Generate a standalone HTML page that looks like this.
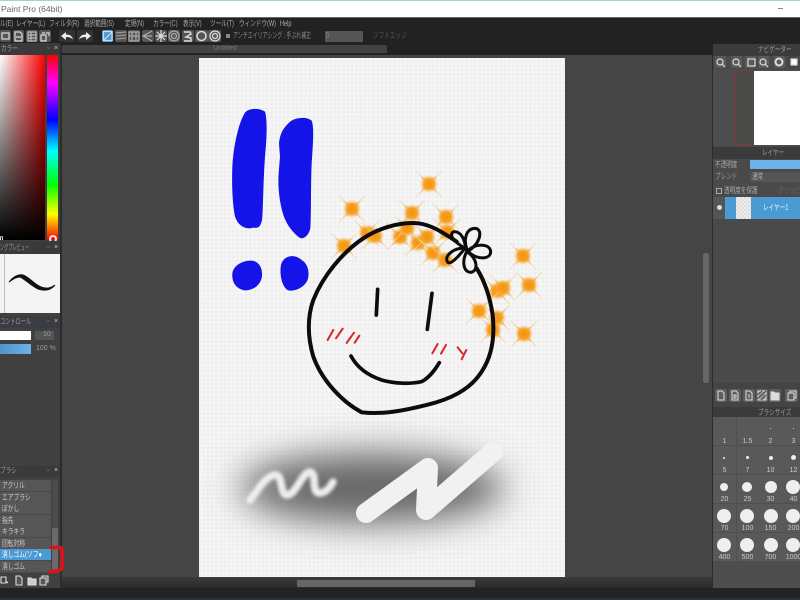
<!DOCTYPE html>
<html lang="ja">
<head>
<meta charset="utf-8">
<title>MediBang Paint Pro</title>
<style>
html,body{margin:0;padding:0;background:#222}
body{width:800px;height:600px;overflow:hidden;position:relative;font-family:"Liberation Sans","Noto Sans CJK JP",sans-serif;color:#bbb}
#r{position:absolute;left:0;top:0;width:800px;height:600px;overflow:hidden;background:#222}
#r div,#r span{position:absolute;white-space:nowrap}
.t,.m{font-size:8px;line-height:10px;filter:blur(.3px);transform:scaleX(.7);transform-origin:0 50%}
.m{top:19px;color:#aaa}
.n{font-size:7px;line-height:10px;filter:blur(.3px)}
.b{top:30px;height:12px;background:#555;border-radius:2px}
.ic{background:#5a5a5a;border-radius:2px;width:11px;height:12px}
.row{left:0;width:51px;height:11px;background:#565656;border-bottom:1px solid #484848;filter:blur(.2px)}
.row span{left:2px;top:0;color:#ccc;font-size:8px;line-height:11px;transform:scaleX(.72);transform-origin:0 50%}
.cell{background:#595959;width:23px;height:28px;border-right:1px solid #4f4f4f;border-bottom:1px solid #4f4f4f}
.lb{font-size:7px;line-height:8px;color:#ccc;width:23px;text-align:center;filter:blur(.3px)}
.d{background:#eee;border-radius:50%}
</style>
</head>
<body>
<div id="r">
<!-- title bar -->
<div style="left:0;top:0;width:800px;height:17px;background:#fff"></div>
<div style="left:0;top:0;width:800px;height:1px;background:#a9ced6"></div>
<div style="left:1px;top:4px;font-size:8.5px;line-height:10px;color:#666;filter:blur(.3px)">Paint Pro (64bit)</div>
<div style="left:778px;top:8px;width:5px;height:1px;background:#888"></div>
<div style="left:0;top:17px;width:800px;height:1px;background:#666"></div>
<!-- menu -->
<span class="m" style="left:0">ル(E)</span>
<span class="m" style="left:16px">レイヤー(L)</span>
<span class="m" style="left:49px">フィルタ(R)</span>
<span class="m" style="left:84px">選択範囲(S)</span>
<span class="m" style="left:125px">定規(N)</span>
<span class="m" style="left:153px">カラー(C)</span>
<span class="m" style="left:183px">表示(V)</span>
<span class="m" style="left:210px">ツール(T)</span>
<span class="m" style="left:239px">ウィンドウ(W)</span>
<span class="m" style="left:280px">Help</span>
<!-- toolbar -->
<div class="b" style="left:0;width:11px"></div>
<div class="b" style="left:13px;width:11px"></div>
<div class="b" style="left:26px;width:12px"></div>
<div class="b" style="left:39px;width:12px"></div>
<div class="b" style="left:59px;width:16px;background:#333"></div>
<div class="b" style="left:77px;width:16px;background:#333"></div>
<div class="b" style="left:102px;width:11px;background:#4a97d8"></div>
<div class="b" style="left:115px;width:12px"></div>
<div class="b" style="left:128px;width:12px"></div>
<div class="b" style="left:142px;width:12px"></div>
<div class="b" style="left:155px;width:12px"></div>
<div class="b" style="left:168px;width:12px"></div>
<div class="b" style="left:182px;width:12px"></div>
<div class="b" style="left:195px;width:13px"></div>
<div class="b" style="left:208px;width:13px"></div>
<svg style="position:absolute;left:0;top:28px" width="230" height="16" viewBox="0 0 230 16" fill="none">
<g stroke="#ddd" stroke-width="1.2">
<rect x="2" y="5" width="7" height="6"/>
<path d="M15 4h5l2 2v7h-7zM16 9h5"/>
<path d="M28 4h8v9h-8zM28 7h8M28 10h8M31 4v9" stroke="#bbb"/>
<path d="M41 7h5v6h-5zM46 5h3v3M42 5h3"/>
<path d="M103.500 3.500h8.500v9h-8.500zM104 12l8-8" stroke="#cde"/>
<path d="M116 5l10-1M116 8l10-1M116 11l10-1" stroke="#999"/>
<path d="M129 4h10v9h-10zM132 4v9M136 4v9M129 8h10" stroke="#aaa"/>
<path d="M152 3l-9 5 9 5M152 8h-9" stroke="#aaa"/>
<path d="M161 2v12M155.500 8h11.500M157 4l8 8M165 4l-8 8"/>
<circle cx="174" cy="8" r="5" stroke="#aaa"/><circle cx="174" cy="8" r="2.500" stroke="#aaa"/>
<path d="M184 4h6l1 2-5 3 5 1v3h-7" stroke-width="1.500"/>
<circle cx="201.500" cy="8" r="4.500" stroke-width="1.500"/>
<circle cx="215" cy="8" r="5"/><circle cx="215" cy="8" r="2.500"/>
</g>
<path d="M61 8l5-4v2.500c4 0 6 1.500 7 5-2-2-4-2.500-7-2.500v3z" fill="#eee"/>
<path d="M91 8l-5-4v2.500c-4 0-6 1.500-7 5 2-2 4-2.500 7-2.500v3z" fill="#eee"/>
<rect x="226" y="6" width="4" height="4" fill="#888"/>
</svg>
<span class="t" style="left:233px;top:31px;color:#888;transform:scaleX(.62)">アンチエイリアシング : 手ぶれ補正</span>
<div style="left:325px;top:31px;width:38px;height:11px;background:#555"></div>
<span class="t" style="left:326px;top:31px;color:#888">0</span>
<span class="t" style="left:373px;top:31px;color:#555">ソフトエッジ</span>
<!-- workspace -->
<div style="left:62px;top:55px;width:650px;height:533px;background:#454545"></div>
<div style="left:62px;top:45px;width:325px;height:8px;background:#424242;border-radius:2px 2px 0 0"></div>
<span class="n" style="left:213px;top:44px;color:#777">Untitled</span>
<!-- canvas -->
<svg style="position:absolute;left:199px;top:58px" width="366" height="519" viewBox="199 58 366 519">
<defs>
<pattern id="chk" width="6" height="6" patternUnits="userSpaceOnUse" patternTransform="rotate(45)">
<rect width="6" height="6" fill="#f6f6f6"/><rect width="3" height="3" fill="#efefef"/><rect x="3" y="3" width="3" height="3" fill="#efefef"/>
</pattern>
<radialGradient id="sg"><stop offset="0" stop-color="#f59210"/><stop offset=".55" stop-color="#f6a020"/><stop offset="1" stop-color="#f8b048" stop-opacity="0"/></radialGradient>
<g id="sp">
<path d="M-13-13L13 13M13-13L-13 13" stroke="#f9d4a4" stroke-width=".8"/>
<path d="M-9-9Q-2-5 0-5Q2-5 9-9Q5-2 5 0Q5 2 9 9Q2 5 0 5Q-2 5-9 9Q-5 2-5 0Q-5-2-9-9Z" fill="#f9b860" opacity=".6"/>
<circle r="9" fill="url(#sg)"/>
</g>
<filter id="b1" x="-40%" y="-100%" width="180%" height="300%"><feGaussianBlur stdDeviation="18"/></filter>
<filter id="b2" x="-20%" y="-30%" width="140%" height="160%"><feGaussianBlur stdDeviation="1.500"/></filter>
</defs>
<rect x="199" y="58" width="366" height="519" fill="url(#chk)"/>
<!-- blue marks -->
<g fill="#1414e8" transform="translate(200 90) scale(.3333)">
<path d="M135 68C145 55 175 52 195 65C203 90 200 150 195 200C190 270 190 330 187 380C186 400 180 418 160 413C140 420 115 410 105 380C97 340 95 280 97 230C100 170 115 100 135 68Z"/>
<path d="M265 100C280 82 320 78 335 92C342 110 340 150 335 220C332 290 334 360 331 415C325 440 310 447 300 444C280 430 260 405 250 375C238 335 233 290 236 250L240 200L237 160C240 130 250 115 265 100Z"/>
<path d="M97 552C98 528 128 510 155 512C178 514 188 535 186 560C182 585 160 602 135 601C110 598 95 578 97 552Z"/>
<path d="M243 525C248 500 280 488 305 510C325 522 330 550 322 572C312 592 285 606 265 601C245 592 238 550 243 525Z"/>
</g>
<!-- sparkles -->
<use href="#sp" x="429" y="184"/><use href="#sp" x="352" y="209"/><use href="#sp" x="412" y="213"/>
<use href="#sp" x="446" y="217"/><use href="#sp" x="367" y="233"/><use href="#sp" x="375" y="236"/>
<use href="#sp" x="344" y="246"/><use href="#sp" x="400" y="237"/><use href="#sp" x="418" y="243"/>
<use href="#sp" x="427" y="237"/><use href="#sp" x="433" y="253"/><use href="#sp" x="407" y="228"/>
<use href="#sp" x="447" y="232"/><use href="#sp" x="445" y="260"/><use href="#sp" x="523" y="256"/>
<use href="#sp" x="497" y="291"/><use href="#sp" x="503" y="288"/><use href="#sp" x="529" y="285"/>
<use href="#sp" x="479" y="311"/><use href="#sp" x="497" y="318"/><use href="#sp" x="493" y="330"/>
<use href="#sp" x="524" y="334"/>
<!-- face -->
<g fill="none" stroke="#0c0c0c" stroke-linecap="round" stroke-linejoin="round" transform="translate(300 160) scale(.3333)">
<path stroke-width="12" d="M470 245C430 218 395 195 355 190C300 185 235 205 190 235C130 275 70 345 40 420C22 470 22 530 40 590C65 660 125 725 185 757C250 765 320 750 380 735C450 718 510 690 545 635C575 590 585 530 578 465C570 410 555 365 530 325"/>
<path stroke-width="11" d="M233 388L229 465M396 400L382 508"/>
<path stroke-width="11" d="M153 588C170 620 200 645 245 660C285 672 335 672 365 665C385 655 405 630 418 608"/>
<g stroke-width="9">
<path d="M500 265C490 235 500 205 525 205C545 205 548 240 510 270"/>
<path d="M505 270C530 250 570 250 572 275C572 300 530 300 505 275"/>
<path d="M500 275C535 295 535 335 512 337C490 335 485 305 500 275"/>
<path d="M495 265C475 290 450 318 442 305C432 285 465 262 495 265"/>
<path d="M495 265C470 250 440 225 462 215C485 215 495 240 497 268"/>
</g>
<g stroke="#d8252a" stroke-width="6">
<path d="M100 510L83 540M128 506L108 535M162 518L140 549M178 527L164 548M413 552L397 580M438 555L423 581M473 562L487 580M499 570L485 598"/>
</g>
</g>
<!-- eraser area -->
<ellipse cx="372" cy="488" rx="132" ry="35" fill="#666" filter="url(#b1)"/>
<path d="M250 500C258 490 265 477 274 475C284 473 279 495 287 495C296 495 302 472 310 472C318 473 310 493 320 493C326 493 331 486 333 482" fill="none" stroke="#eee" stroke-width="7.500" stroke-linecap="round" stroke-linejoin="round" filter="url(#b2)"/>
<path d="M366 513L428 468L426 510L493 452" fill="none" stroke="#f1f1f1" stroke-width="20" stroke-linecap="round" stroke-linejoin="round"/>
</svg>
<!-- canvas scrollbars -->
<div style="left:712px;top:55px;width:1px;height:533px;background:#2c2c2c"></div>
<div style="left:703px;top:253px;width:6px;height:130px;background:#666;border-radius:2px"></div>
<div style="left:62px;top:577px;width:650px;height:11px;background:linear-gradient(#3b3b3b,#2a2a2a)"></div>
<div style="left:297px;top:580px;width:178px;height:7px;background:#666;border-radius:1px"></div>
<div style="left:0;top:588px;width:800px;height:12px;background:#232323"></div>
<div style="left:0;top:598px;width:800px;height:2px;background:#26323a"></div>
<!-- left column -->
<div style="left:0;top:43px;width:60px;height:545px;background:#404040"></div>
<div style="left:60px;top:43px;width:2px;height:545px;background:#2c2c2c"></div>
<div style="left:0;top:43px;width:60px;height:12px;background:#3a3a3a"></div>
<span class="t" style="left:1px;top:44px;color:#999">カラー</span>
<span class="n" style="left:47px;top:44px;color:#888">▫</span>
<span class="n" style="left:54px;top:44px;color:#ccc">×</span>
<div style="left:0;top:55px;width:45px;height:185px;background:linear-gradient(#0000,#000),linear-gradient(90deg,#fff,#f00)"></div>
<div style="left:47px;top:55px;width:11px;height:185px;background:linear-gradient(#f00,#f0f 15%,#00f 35%,#0ff 52%,#0f0 70%,#ff0 86%,#f00)"></div>
<div style="left:49px;top:235px;width:8px;height:8px;border:2px solid #eee;border-radius:50%;border-bottom-color:transparent;box-sizing:border-box"></div>
<div style="left:0;top:236px;width:3px;height:4px;border:1px solid #ddd;border-radius:50% 50% 0 0;border-bottom:0;box-sizing:border-box"></div>
<div style="left:0;top:241px;width:60px;height:13px;background:#3a3a3a"></div>
<span class="t" style="left:0;top:243px;color:#999;transform:scaleX(.52)">ングプレビュー</span>
<span class="n" style="left:47px;top:243px;color:#888">▫</span>
<span class="n" style="left:54px;top:243px;color:#ccc">×</span>
<div style="left:0;top:254px;width:60px;height:59px;background:#f4f4f4"></div>
<div style="left:4px;top:254px;width:1px;height:59px;background:#bbb"></div>
<svg style="position:absolute;left:0;top:254px" width="60" height="59" viewBox="0 254 60 59">
<path d="M9 282C13 277 18 274 23 275C29 277 34 284 41 287C46 289 51 288 55 285C50 291 44 291 38 289C30 285 25 279 20 277C16 277 13 279 9 282Z" fill="#111" stroke="#111"/>
</svg>
<div style="left:0;top:316px;width:60px;height:12px;background:#393d42"></div>
<span class="t" style="left:0;top:317px;color:#999;transform:scaleX(.65)">コントロール</span>
<span class="n" style="left:47px;top:317px;color:#888">▫</span>
<span class="n" style="left:54px;top:317px;color:#ccc">×</span>
<div style="left:0;top:331px;width:31px;height:9px;background:#fff"></div>
<div style="left:35px;top:331px;width:19px;height:9px;background:#555"></div>
<span class="n" style="left:43px;top:330px;color:#999">10</span>
<div style="left:0;top:344px;width:31px;height:10px;background:linear-gradient(90deg,#4f94cc,#6fb1e6)"></div>
<span class="n" style="left:36px;top:344px;color:#999">100 %</span>
<!-- brush panel -->
<div style="left:0;top:466px;width:60px;height:11px;background:#3a3a3a"></div>
<span class="t" style="left:0;top:466px;color:#999">ブラシ</span>
<span class="n" style="left:47px;top:466px;color:#888">▫</span>
<span class="n" style="left:54px;top:466px;color:#ccc">×</span>
<div class="row" style="top:480px"><span>アクリル</span></div>
<div class="row" style="top:491.500px"><span>エアブラシ</span></div>
<div class="row" style="top:503px"><span>ぼかし</span></div>
<div class="row" style="top:514.500px"><span>指先</span></div>
<div class="row" style="top:526px"><span>キラキラ</span></div>
<div class="row" style="top:537.500px"><span>回転対称</span></div>
<div class="row" style="top:549px;background:#4a9ad4"><span style="color:#fff">消しゴム(ソフ●</span></div>
<div class="row" style="top:560.500px"><span>消しゴム</span></div>
<div style="left:52px;top:480px;width:6px;height:93px;background:#4c4c4c"></div>
<div style="left:52px;top:528px;width:6px;height:45px;background:#6a6a6a"></div>
<svg style="position:absolute;left:0;top:540px" width="70" height="60" viewBox="0 540 70 60" fill="none">
<path d="M51 547.500H59Q62 547.500 62 551V566Q62 570 58 570.500L50 572" stroke="#e0101a" stroke-width="3.500" stroke-linecap="round"/>
<g stroke="#ddd" stroke-width="1.100">
<path d="M1 577h5v6h-5zM6 581l2 2"/>
<path d="M16 576h4l2 2v7h-6z" fill="#555"/>
<path d="M28 578h3l1 1h4v6h-8z" fill="#ccc"/>
<path d="M40 578h6v7h-6zM42 578v-2h6v6h-2" fill="#555"/>
</g>
</svg>
<!-- right column -->
<div style="left:713px;top:44px;width:87px;height:544px;background:#4a4a4a"></div>
<div style="left:713px;top:44px;width:87px;height:12px;background:#3b3b3b"></div>
<span class="t" style="left:758px;top:45px;color:#999">ナビゲーター</span>
<div class="ic" style="left:715px;top:56px"></div>
<div class="ic" style="left:731px;top:56px"></div>
<div class="ic" style="left:745px;top:56px"></div>
<div class="ic" style="left:758px;top:56px"></div>
<div class="ic" style="left:774px;top:56px"></div>
<div class="ic" style="left:788px;top:56px;background:#444"></div>
<svg style="position:absolute;left:713px;top:56px" width="87" height="13" viewBox="0 0 87 13" fill="none" stroke="#ddd" stroke-width="1.200">
<circle cx="7" cy="6" r="3"/><path d="M9 8l3 3"/>
<circle cx="23" cy="6" r="3"/><path d="M25 8l3 3"/>
<rect x="35" y="3" width="7" height="7"/>
<circle cx="50" cy="6" r="3"/><path d="M52 8l3 3"/>
<circle cx="66" cy="6" r="3.500" stroke-width="2"/>
<rect x="78" y="3" width="6" height="6" fill="#fff"/>
</svg>
<div style="left:713px;top:70px;width:87px;height:75px;background:#4e4e4e"></div>
<div style="left:735px;top:70px;width:19px;height:75px;background:#4a4a48;box-sizing:border-box;border:1px solid #8e3434;border-right:0"></div>
<div style="left:754px;top:71px;width:46px;height:74px;background:#fff"></div>
<div style="left:713px;top:147px;width:87px;height:12px;background:#3b3b3b"></div>
<span class="t" style="left:762px;top:148px;color:#999">レイヤー</span>
<span class="t" style="left:715px;top:160px;color:#aaa">不透明度</span>
<div style="left:750px;top:160px;width:50px;height:9px;background:#6db3ea"></div>
<span class="t" style="left:715px;top:172px;color:#999">ブレンド</span>
<div style="left:750px;top:172px;width:50px;height:10px;background:#555"></div>
<span class="t" style="left:752px;top:172px;color:#aaa">通常</span>
<div style="left:716px;top:188px;width:4px;height:4px;border:1px solid #aaa"></div>
<span class="t" style="left:724px;top:186px;color:#aaa">透明度を保護</span>
<span class="t" style="left:778px;top:186px;color:#666">クリッピング</span>
<div style="left:713px;top:197px;width:12px;height:22px;background:#555"></div>
<div style="left:717px;top:205px;width:5px;height:5px;background:#ddd;border-radius:50%"></div>
<div style="left:725px;top:197px;width:75px;height:22px;background:#4a9ad4"></div>
<div style="left:736px;top:197px;width:15px;height:22px;background:repeating-conic-gradient(#eee 0 25%,#ddd 0 50%) 0 0/4px 4px"></div>
<span class="t" style="left:763px;top:203px;color:#e6f2fb">レイヤー1</span>
<div style="left:713px;top:383px;width:87px;height:24px;background:#444"></div>
<svg style="position:absolute;left:713px;top:388px" width="87" height="16" viewBox="713 388 87 16" fill="none">
<rect x="715" y="389" width="12" height="13" rx="2" fill="#5e5e5e"/>
<rect x="729" y="389" width="12" height="13" rx="2" fill="#5e5e5e"/>
<rect x="743" y="389" width="12" height="13" rx="2" fill="#5e5e5e"/>
<rect x="756" y="389" width="12" height="13" rx="2" fill="#5e5e5e"/>
<rect x="769" y="389" width="12" height="13" rx="2" fill="#5e5e5e"/>
<rect x="785" y="389" width="13" height="13" rx="2" fill="#5e5e5e"/>
<g stroke="#ddd" stroke-width="1">
<path d="M718 391h4l2 2v7h-6z"/>
<path d="M732 391h4l2 2v7h-6zM734 395h2v3h-2z"/>
<path d="M746 391h4l2 2v7h-6zM749 394v4"/>
<rect x="758" y="391" width="8" height="9" fill="#999"/>
<path d="M757 399l9-8M757 395l5-4M761 400l5-5" stroke="#444"/>
<path d="M771 392h3l1 1h4v7h-8z" fill="#ddd"/>
<path d="M788 393h6v7h-6zM790 393v-2h6v7h-2"/>
</g>
</svg>
<div style="left:713px;top:407px;width:87px;height:11px;background:#3b3b3b"></div>
<span class="t" style="left:758px;top:408px;color:#999">ブラシサイズ</span>
<div style="left:713px;top:418px;width:87px;height:170px;background:#4d4d4d"></div>
<!-- size grid -->
<div class="cell" style="left:713px;top:417px"></div><div class="cell" style="left:737px;top:417px"></div><div class="cell" style="left:760px;top:417px"></div><div class="cell" style="left:783px;top:417px"></div>
<div class="cell" style="left:713px;top:446px"></div><div class="cell" style="left:737px;top:446px"></div><div class="cell" style="left:760px;top:446px"></div><div class="cell" style="left:783px;top:446px"></div>
<div class="cell" style="left:713px;top:475px"></div><div class="cell" style="left:737px;top:475px"></div><div class="cell" style="left:760px;top:475px"></div><div class="cell" style="left:783px;top:475px"></div>
<div class="cell" style="left:713px;top:504px"></div><div class="cell" style="left:737px;top:504px"></div><div class="cell" style="left:760px;top:504px"></div><div class="cell" style="left:783px;top:504px"></div>
<div class="cell" style="left:713px;top:533px"></div><div class="cell" style="left:737px;top:533px"></div><div class="cell" style="left:760px;top:533px"></div><div class="cell" style="left:783px;top:533px"></div>
<span class="lb" style="left:713px;top:438px">1</span><span class="lb" style="left:736px;top:438px">1.5</span><span class="lb" style="left:759px;top:438px">2</span><span class="lb" style="left:782px;top:438px">3</span>
<span class="lb" style="left:713px;top:467px">5</span><span class="lb" style="left:736px;top:467px">7</span><span class="lb" style="left:759px;top:467px">10</span><span class="lb" style="left:782px;top:467px">12</span>
<span class="lb" style="left:713px;top:496px">20</span><span class="lb" style="left:736px;top:496px">25</span><span class="lb" style="left:759px;top:496px">30</span><span class="lb" style="left:782px;top:496px">40</span>
<span class="lb" style="left:713px;top:525px">70</span><span class="lb" style="left:736px;top:525px">100</span><span class="lb" style="left:759px;top:525px">150</span><span class="lb" style="left:782px;top:525px">200</span>
<span class="lb" style="left:713px;top:554px">400</span><span class="lb" style="left:736px;top:554px">500</span><span class="lb" style="left:759px;top:554px">700</span><span class="lb" style="left:782px;top:554px">1000</span>
<div class="d" style="left:770px;top:428px;width:1px;height:1px"></div><div class="d" style="left:793px;top:428px;width:1px;height:1px"></div>
<div class="d" style="left:723px;top:457px;width:2px;height:2px"></div><div class="d" style="left:746px;top:456px;width:3px;height:3px"></div><div class="d" style="left:769px;top:456px;width:4px;height:4px"></div><div class="d" style="left:791px;top:455px;width:5px;height:5px"></div>
<div class="d" style="left:720px;top:483px;width:8px;height:8px"></div><div class="d" style="left:742px;top:482px;width:10px;height:10px"></div><div class="d" style="left:765px;top:481px;width:12px;height:12px"></div><div class="d" style="left:786px;top:480px;width:14px;height:14px"></div>
<div class="d" style="left:717px;top:509px;width:14px;height:14px"></div><div class="d" style="left:740px;top:509px;width:14px;height:14px"></div><div class="d" style="left:764px;top:509px;width:14px;height:14px"></div><div class="d" style="left:786px;top:509px;width:14px;height:14px"></div>
<div class="d" style="left:717px;top:538px;width:14px;height:14px"></div><div class="d" style="left:740px;top:538px;width:14px;height:14px"></div><div class="d" style="left:764px;top:538px;width:14px;height:14px"></div><div class="d" style="left:786px;top:538px;width:14px;height:14px"></div>
</div>
</body>
</html>
